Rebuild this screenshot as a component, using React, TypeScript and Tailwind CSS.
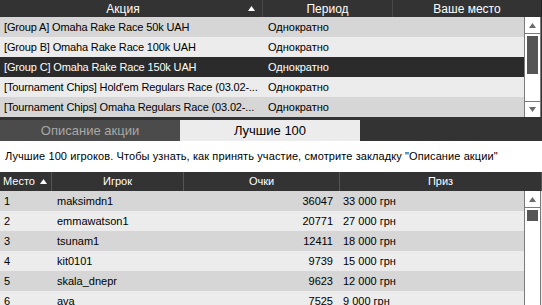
import React from "react";

const topRows = [
  { name: "[Group A] Omaha Rake Race 50k UAH", period: "Однократно" },
  { name: "[Group B] Omaha Rake Race 100k UAH", period: "Однократно" },
  { name: "[Group C] Omaha Rake Race 150k UAH", period: "Однократно", selected: true },
  { name: "[Tournament Chips] Hold'em Regulars Race (03.02-...", period: "Однократно" },
  { name: "[Tournament Chips] Omaha Regulars Race (03.02-...", period: "Однократно" },
];

const players = [
  { place: "1", name: "maksimdn1", points: "36047", prize: "33 000 грн" },
  { place: "2", name: "emmawatson1", points: "20771", prize: "27 000 грн" },
  { place: "3", name: "tsunam1", points: "12411", prize: "18 000 грн" },
  { place: "4", name: "kit0101", points: "9739", prize: "15 000 грн" },
  { place: "5", name: "skala_dnepr", points: "9623", prize: "12 000 грн" },
  { place: "6", name: "ava", points: "7525", prize: "9 000 грн" },
];

function TriUp({ color = "#6b6b6b" }: { color?: string }) {
  return (
    <svg width="7" height="5" viewBox="0 0 7 5">
      <polygon points="3.5,0 7,5 0,5" fill={color} />
    </svg>
  );
}
function TriDown({ color = "#6b6b6b" }: { color?: string }) {
  return (
    <svg width="7" height="5" viewBox="0 0 7 5">
      <polygon points="0,0 7,0 3.5,5" fill={color} />
    </svg>
  );
}

export default function App() {
  return (
    <div
      className="w-[542px] h-[305px] overflow-hidden bg-[#333333] text-[11px] leading-none text-black"
      style={{ fontFamily: '"Liberation Sans", Arial, sans-serif' }}
    >
      {/* Top table header */}
      <div className="flex h-[17px] bg-[#333333] text-white border-r border-[#222]">
        <div className="w-[262px] flex items-center">
          <div className="flex-1 text-center text-[12px]">Акция</div>
          <div className="w-[16px] flex justify-center pr-[6px]">
            <TriUp color="#ffffff" />
          </div>
        </div>
        <div className="w-[130px] flex items-center justify-center border-l border-[#4a4a4a] text-[12px]">
          Период
        </div>
        <div className="flex-1 flex items-center justify-center border-l border-[#4a4a4a] text-[12px]">
          Ваше место
        </div>
      </div>
      {/* Top table body */}
      <div className="flex h-[100px]">
        <div className="w-[524px] flex flex-col">
          {topRows.map((r, i) => (
            <div
              key={i}
              className={
                "h-[20px] flex items-center " +
                (r.selected
                  ? "bg-[#2b2b2b] text-white"
                  : i % 2 === 0
                  ? "bg-[#d6d6d6]"
                  : "bg-[#ececec]")
              }
            >
              <div className="w-[262px] pl-[4px] whitespace-nowrap overflow-hidden text-[11px] tracking-[-0.15px]">{r.name}</div>
              <div className="w-[130px] pl-[6px] whitespace-nowrap overflow-hidden text-[11px]">{r.period}</div>
              <div className="flex-1" />
            </div>
          ))}
        </div>
        <div className="w-[17px] flex flex-col bg-white border-x border-[#7a7a7a]">
          <div className="h-[17px] flex items-center justify-center border-b border-[#7a7a7a]">
            <TriUp />
          </div>
          <div className="flex-1 px-[2px] pt-[2px]">
            <div className="h-[38px] bg-[#555555]" />
          </div>
          <div className="h-[16px] flex items-center justify-center border-t border-[#7a7a7a]">
            <TriDown />
          </div>
        </div>
        <div className="w-[1px] bg-[#333333]" />
      </div>
      {/* Tabs */}
      <div className="pt-[3px] bg-[#333333]">
        <div className="flex h-[21px] text-[13px]">
          <div className="w-[180px] flex items-center justify-center bg-[#4b4b4b] text-[#a8a8a8]">
            Описание акции
          </div>
          <div className="w-[180px] flex items-center justify-center bg-[#ececec] text-black">
            Лучшие 100
          </div>
        </div>
      </div>
      {/* Info */}
      <div className="h-[31px] bg-white flex items-center pl-[5px] text-[11px] whitespace-nowrap tracking-[0.1px]">
        Лучшие 100 игроков. Чтобы узнать, как принять участие, смотрите закладку "Описание акции"
      </div>
      {/* Lower header */}
      <div className="flex h-[19px] bg-[#333333] text-white border-r border-[#555] text-[11px]">
        <div className="w-[51px] flex items-center pl-[3px] gap-[5px]">
          <span>Место</span>
          <TriUp color="#ffffff" />
        </div>
        <div className="w-[132px] flex items-center justify-center border-l border-[#555]">Игрок</div>
        <div className="w-[156px] flex items-center justify-center border-l border-[#555]">Очки</div>
        <div className="flex-1 flex items-center justify-center border-l border-[#555]">Приз</div>
      </div>
      {/* Lower body */}
      <div className="flex">
        <div className="w-[524px] flex flex-col">
          {players.map((p, i) => (
            <div
              key={i}
              className={"h-[20px] flex items-center " + (i % 2 === 0 ? "bg-[#d6d6d6]" : "bg-[#ececec]")}
            >
              <div className="w-[51px] pl-[4px]">{p.place}</div>
              <div className="w-[132px] pl-[6px]">{p.name}</div>
              <div className="w-[156px] pr-[6px] text-right">{p.points}</div>
              <div className="flex-1 pl-[4px]">{p.prize}</div>
            </div>
          ))}
        </div>
        <div className="w-[17px] flex flex-col bg-white border-x border-[#7a7a7a] h-[120px]">
          <div className="h-[17px] flex items-center justify-center border-b border-[#7a7a7a]">
            <TriUp />
          </div>
          <div className="px-[2px] pt-[2px]">
            <div className="h-[11px] bg-[#555555]" />
          </div>
        </div>
        <div className="w-[1px] bg-[#ececec] h-[120px]" />
      </div>
    </div>
  );
}
